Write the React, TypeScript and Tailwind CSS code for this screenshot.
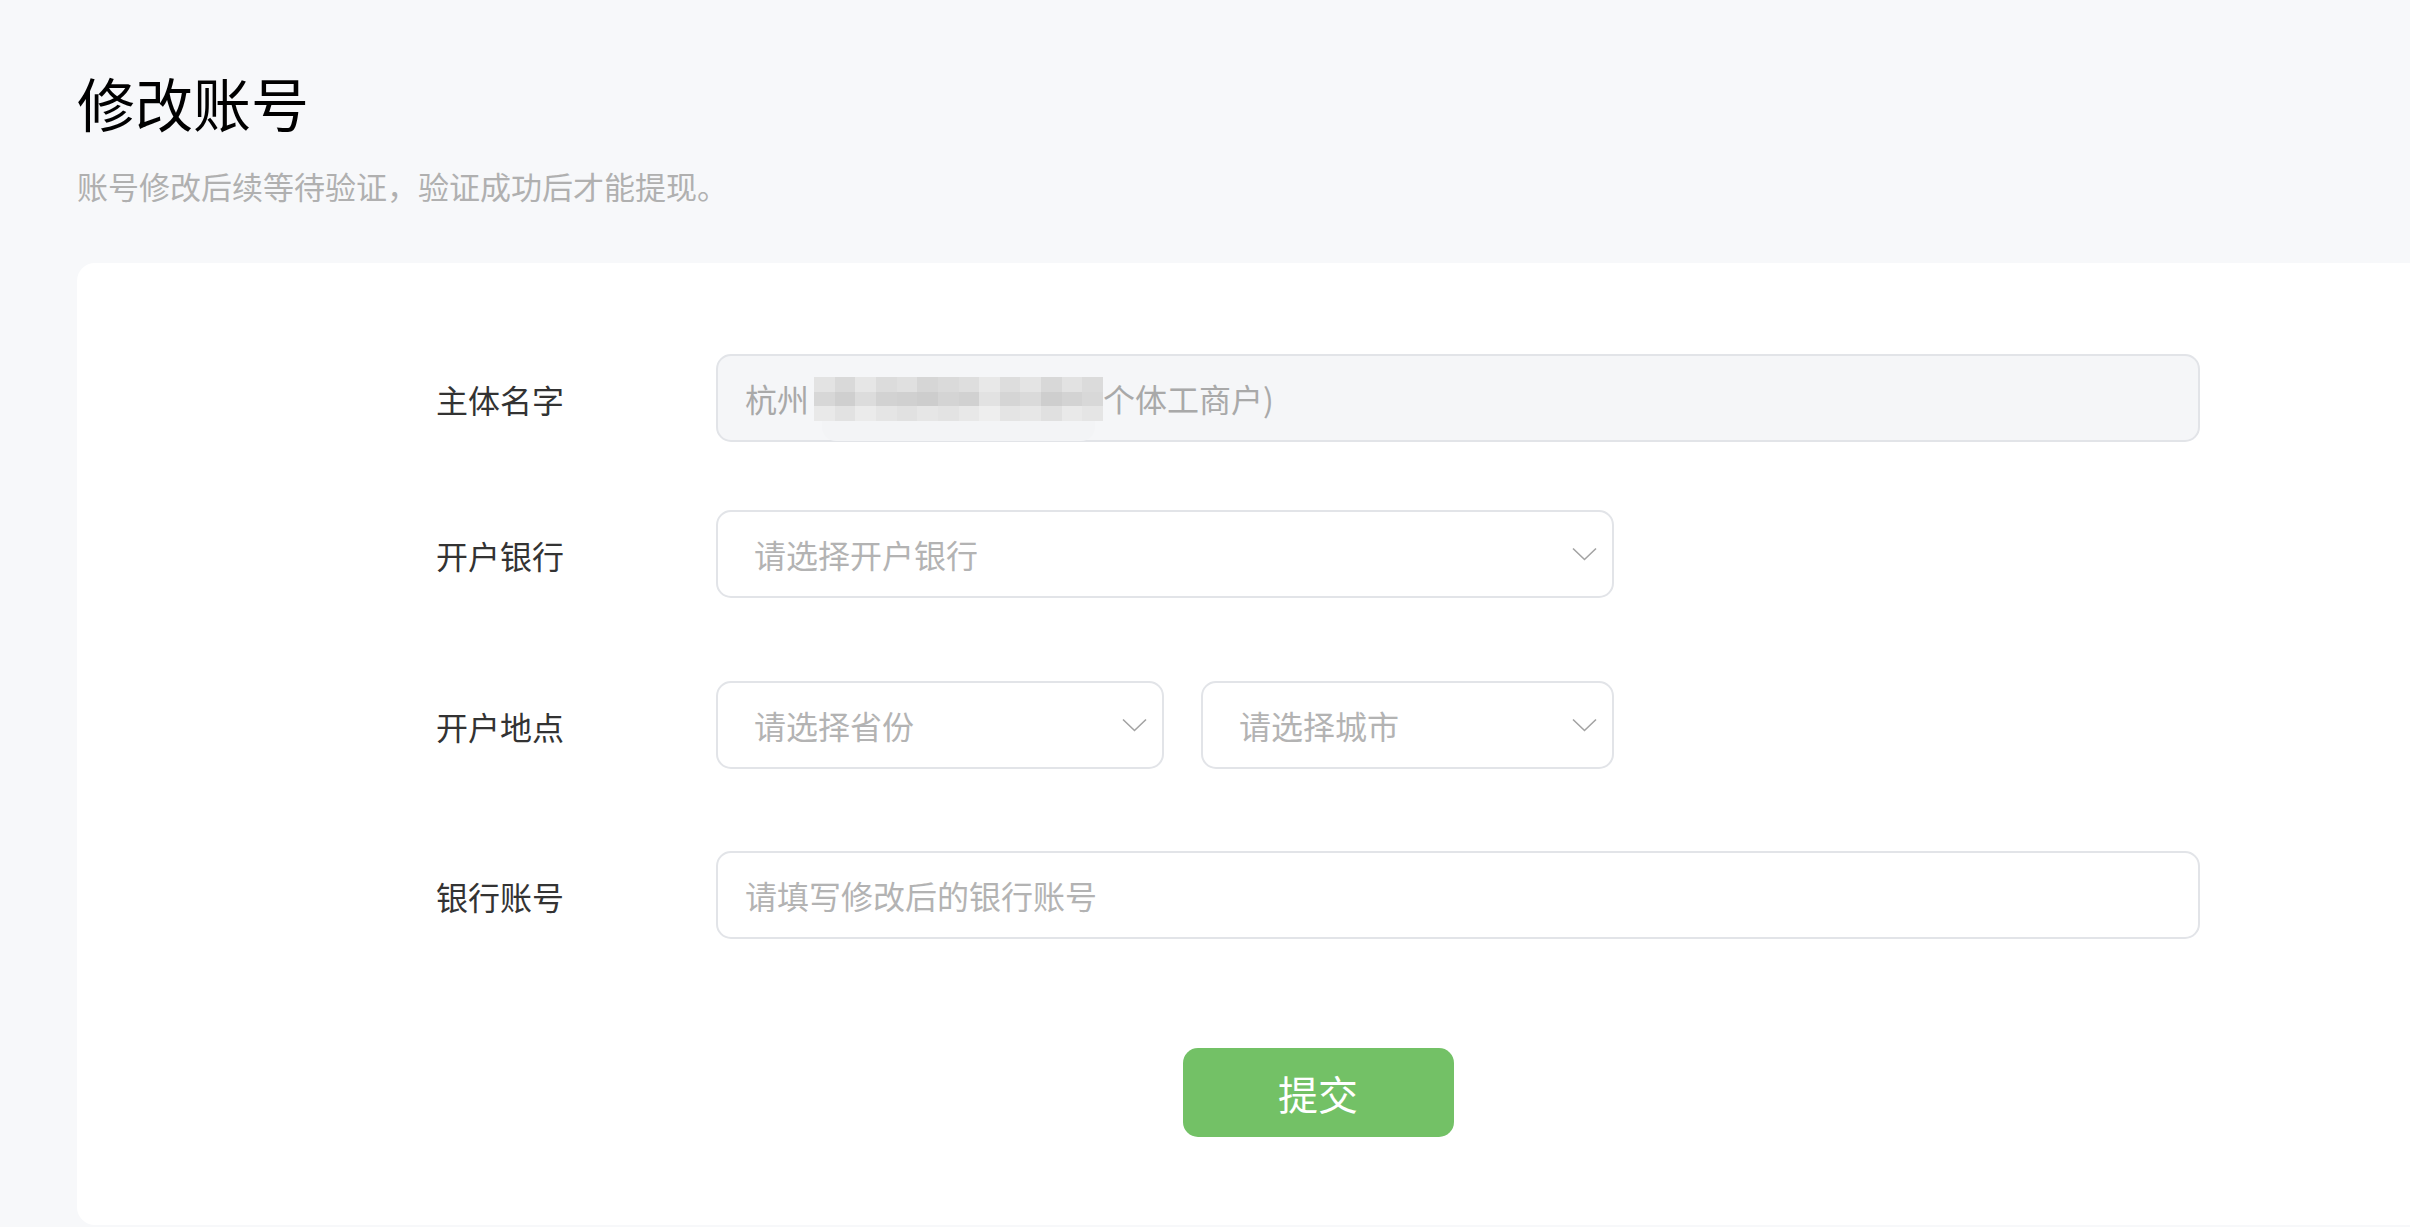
import React from "react";

const FONT = '"Noto Sans CJK SC", "Noto Sans", sans-serif';

const MOSAIC: string[][] = [
  ["#e3e3e3", "#d9d9d9", "#e6e6e6", "#dcdcdc", "#e0e0e0", "#d6d6d6", "#dadada", "#dedede", "#e8e8e8", "#dddddd", "#e4e4e4", "#d8d8d8", "#e2e2e2", "#dbdbdb"],
  ["#d7d7d7", "#cfcfcf", "#dcdcdc", "#d2d2d2", "#d0d0d0", "#cdcdcd", "#d4d4d4", "#d1d1d1", "#e2e2e2", "#d5d5d5", "#dadada", "#cecece", "#d3d3d3", "#d8d8d8"],
  ["#e9e9e9", "#e2e2e2", "#ebebeb", "#e5e5e5", "#e1e1e1", "#e6e6e6", "#e3e3e3", "#e8e8e8", "#eeeeee", "#e4e4e4", "#e7e7e7", "#e0e0e0", "#e9e9e9", "#e5e5e5"],
];

function Chevron() {
  return (
    <svg width="25" height="14" viewBox="0 0 25 14" fill="none">
      <polyline points="1,1.5 12.5,12.5 24,1.5" stroke="#a3a3a3" strokeWidth="1.6" fill="none" />
    </svg>
  );
}

function Select({ text, width }: { text: string; width: string }) {
  return (
    <div
      className={`${width} h-[88px] flex items-center justify-between rounded-[15px] border-2 border-[#e2e4e8] bg-white pl-[36px] pr-[15px]`}
    >
      <span className="text-[32px] leading-none text-[#b3b3b3]">{text}</span>
      <Chevron />
    </div>
  );
}

function Row({ label, children, className }: { label: string; children: React.ReactNode; className?: string }) {
  return (
    <div className={`flex items-center ${className ?? ""}`}>
      <div className="w-[280px] shrink-0 pt-[1px] text-[32px] leading-none text-[#333333]">{label}</div>
      {children}
    </div>
  );
}

export default function App() {
  return (
    <div className="h-[1227px] w-full overflow-hidden bg-[#f7f8fa]" style={{ fontFamily: FONT }}>
      <div className="pl-[77px] pt-[73px]">
        <h1 className="text-[58px] leading-none font-normal text-black">修改账号</h1>
        <p className="mt-[39px] text-[31px] leading-none text-[#b0b0b0]">账号修改后续等待验证，验证成功后才能提现。</p>
      </div>

      <div className="ml-[77px] mr-[-40px] mt-[62px] h-[962px] rounded-[18px] bg-white pl-[359px] pt-[91px]">
        <div className="w-[1764px]">
          <Row label="主体名字">
            <div className="relative w-[1484px] h-[88px] flex items-center rounded-[15px] border-2 border-[#e2e4e8] bg-[#f5f6f8] pl-[27px]">
              <span className="text-[32px] leading-none text-[#a9a9a9]">杭州</span>
              <span className="relative inline-flex flex-col w-[289px] h-[44px] ml-[5px] mt-[2px]">
                {MOSAIC.map((row, r) => (
                  <span key={r} className="flex h-[14.6px]">
                    {row.map((c, i) => (
                      <span key={i} className="h-full flex-1" style={{ backgroundColor: c }} />
                    ))}
                  </span>
                ))}
                <span className="absolute left-[8px] right-[8px] top-[44px] h-[20px] rounded-b-[14px] bg-[#f3f4f6]" />
              </span>
              <span className="text-[32px] leading-none text-[#a9a9a9]">个体工商户)</span>
            </div>
          </Row>

          <Row label="开户银行" className="mt-[68px]">
            <Select text="请选择开户银行" width="w-[898px]" />
          </Row>

          <Row label="开户地点" className="mt-[83px]">
            <div className="flex gap-[37px]">
              <Select text="请选择省份" width="w-[448px]" />
              <Select text="请选择城市" width="w-[413px]" />
            </div>
          </Row>

          <Row label="银行账号" className="mt-[82px]">
            <div className="w-[1484px] h-[88px] flex items-center rounded-[15px] border-2 border-[#e2e4e8] bg-white pl-[27px]">
              <span className="text-[32px] leading-none text-[#b3b3b3]">请填写修改后的银行账号</span>
            </div>
          </Row>

          <div className="mt-[109px] flex justify-center">
            <button className="w-[271px] h-[89px] rounded-[15px] bg-[#73c166] text-[40px] leading-none text-white">
              提交
            </button>
          </div>
        </div>
      </div>
    </div>
  );
}
